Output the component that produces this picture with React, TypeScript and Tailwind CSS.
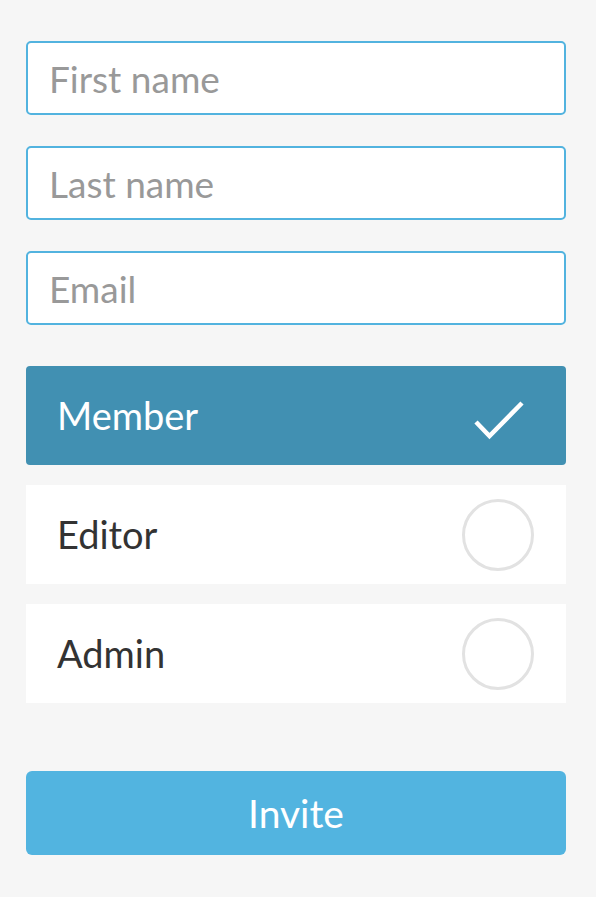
import { useState } from "react";

const roles = ["Member", "Editor", "Admin"];

export default function App() {
  const [role, setRole] = useState("Member");

  return (
    <div className="min-h-screen bg-[#f6f6f6] pl-[26px] pr-[30px] pt-[41px] font-['Lato',sans-serif]">
      {/* inputs */}
      <div className="flex flex-col gap-[31px]">
        {["First name", "Last name", "Email"].map((p) => (
          <input
            key={p}
            placeholder={p}
            className="h-[74px] w-full rounded-[5px] border-2 border-[#52b3df] bg-white px-[21px] text-[37px] text-[#333] placeholder:text-[#999] outline-none"
          />
        ))}
      </div>

      {/* roles */}
      <div className="mt-[41px] flex flex-col gap-[20px]">
        {roles.map((r) => {
          const active = r === role;
          return (
            <div
              key={r}
              onClick={() => setRole(r)}
              className={
                active
                  ? "flex h-[99px] cursor-pointer items-center justify-between rounded-[4px] bg-[#4190b2] pl-[31px] pr-[32px] text-white"
                  : "flex h-[99px] cursor-pointer items-center justify-between bg-white pl-[31px] pr-[32px] text-[#333]"
              }
            >
              <span className="text-[38px]">{r}</span>
              {active ? (
                <svg width="72" height="72" viewBox="0 0 72 72" fill="none">
                  <path d="M14 42 L27.5 56 L60 23" stroke="white" strokeWidth="4.5" />
                </svg>
              ) : (
                <div className="h-[72px] w-[72px] rounded-full border-[3px] border-[#e2e2e2]" />
              )}
            </div>
          );
        })}
      </div>

      <button className="mt-[68px] h-[84px] w-full rounded-[6px] bg-[#52b4e0] text-[39px] text-white">
        Invite
      </button>
    </div>
  );
}
